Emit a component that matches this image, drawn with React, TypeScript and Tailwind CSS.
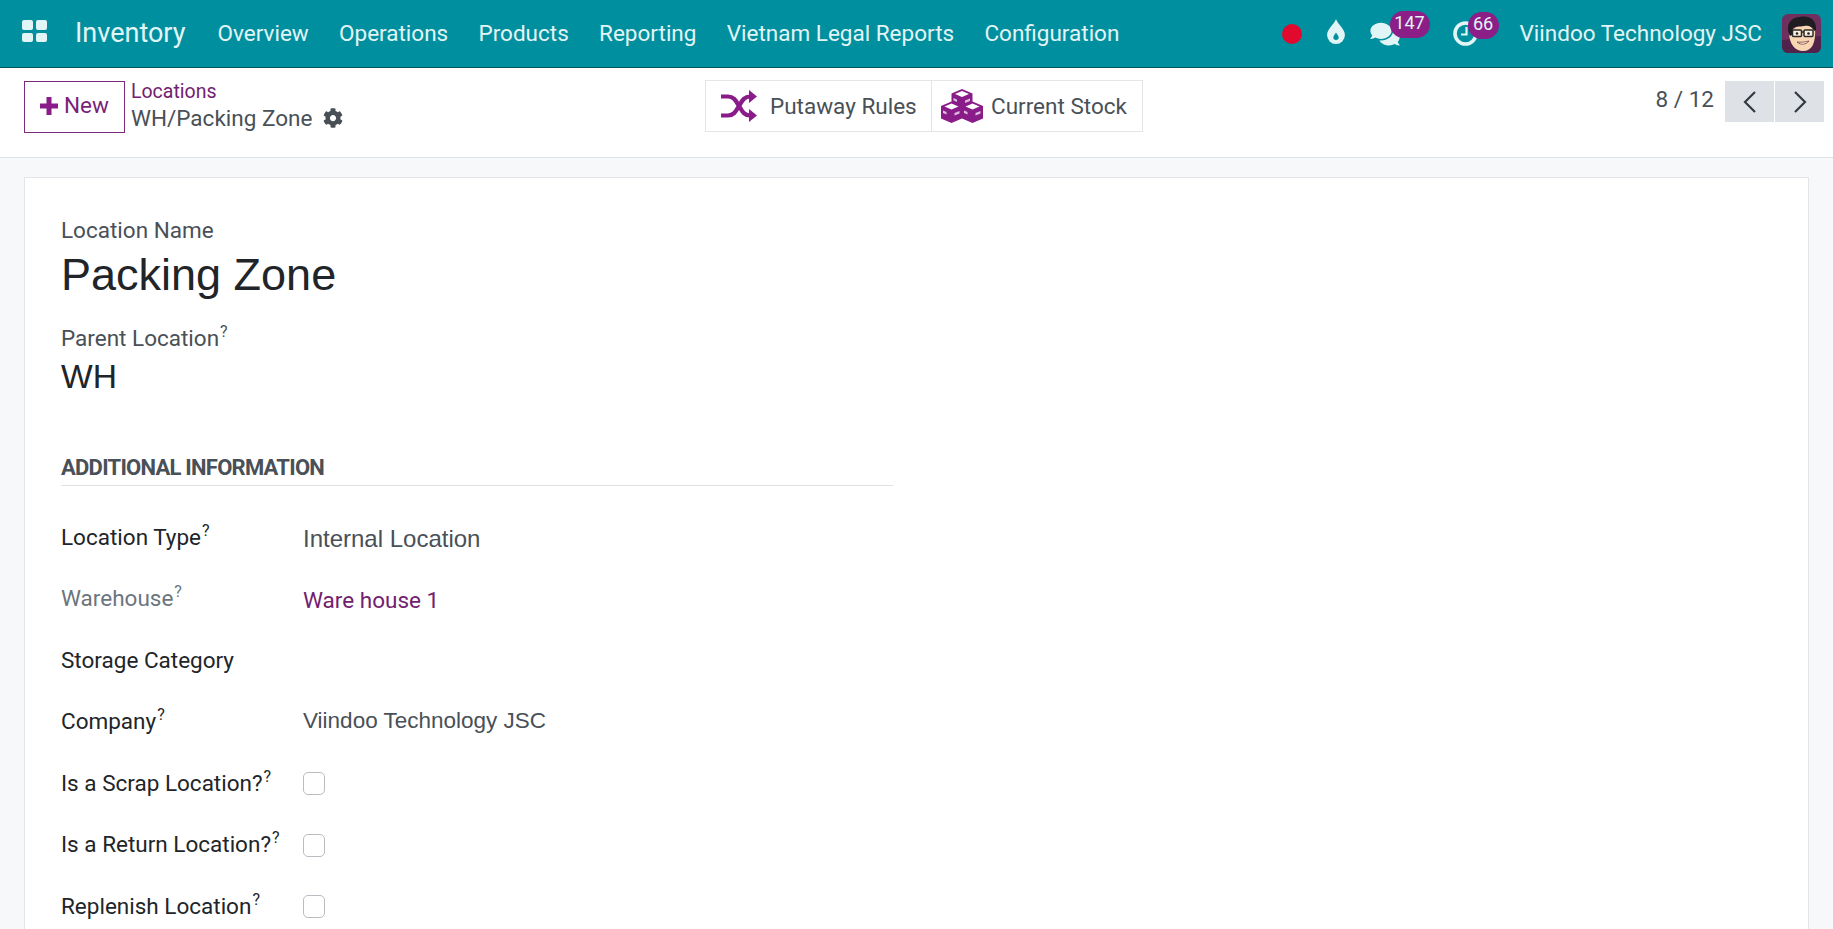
import { FaCog, FaComments } from 'react-icons/fa';

const navItems = ['Overview', 'Operations', 'Products', 'Reporting', 'Vietnam Legal Reports', 'Configuration'];

function Avatar() {
  return (
    <svg viewBox="0 0 39 39" className="w-[39px] h-[39px] rounded-[6px]">
      <rect width="39" height="39" fill="#6f305f" />
      <path d="M0 26 L39 22 V39 H0Z" fill="#52234a" />
      <path d="M7 18 C7 30 13 37 21 37 C30 37 34 29 33 14 L20 9 Z" fill="#f8d6b3" />
      <path d="M8 22 C3 12 8 3 18 3 C26 1 35 5 34 16 L32 17 C30 12 26 11 22 12 C17 13 13 12 11 14 L10 21 Z" fill="#1f1c22" />
      <rect x="10.5" y="16" width="9" height="6.5" rx="1" fill="#fbeede" stroke="#2a2a2a" strokeWidth="1.5" />
      <rect x="22" y="16" width="9" height="6.5" rx="1" fill="#fbeede" stroke="#2a2a2a" strokeWidth="1.5" />
      <path d="M19.5 18 H22" stroke="#2a2a2a" strokeWidth="1.3" />
      <circle cx="15" cy="19.5" r="1.3" fill="#222" />
      <circle cx="26.5" cy="19.5" r="1.3" fill="#222" />
      <path d="M15 28 C19 31.5 24 30.5 27 27 C24 28 19 28.5 15 28Z" fill="#fff" stroke="#8b4a3a" strokeWidth="0.9" />
    </svg>
  );
}

function ShuffleIcon() {
  return (
    <svg viewBox="0 0 36 32" className="ml-[15px] w-[36px] h-[32px] text-[#8a1c8a]" fill="none" stroke="currentColor" strokeWidth="4.2">
      <path d="M0 6.5 H7 C13 6.5 15 11 18 16 C21 21 23 25.5 29 25.5 H30" />
      <path d="M0 25.5 H7 C13 25.5 15 21 18 16 C21 11 23 6.5 29 6.5 H30" />
      <path d="M28 0 L36 6.5 L28 13Z M28 19 L36 25.5 L28 32Z" fill="currentColor" stroke="none" />
    </svg>
  );
}

function Cube({ cx, y }: { cx: number; y: number }) {
  return (
    <g>
      <path d={`M${cx} ${y} l10.5 4.6 v12.4 l-10.5 4.6 l-10.5 -4.6 v-12.4z`} fill="#8a1c8a" />
      <path d={`M${cx} ${y + 2} l7 3 l-7 3 l-7 -3z`} fill="#fff" />
      <path d={`M${cx - 8.5} ${y + 9} l3.5 1.5 v2.5 l-3.5 -1.5z`} fill="#fff" opacity="0.7" />
      <path d={`M${cx + 3} ${y + 11.5} l5 -2 v2.5 l-5 2z`} fill="#fff" opacity="0.7" />
    </g>
  );
}

function CubesIcon() {
  return (
    <svg viewBox="0 0 42 34" className="ml-[9px] w-[42px] h-[34px]">
      <Cube cx={21} y={0} />
      <Cube cx={10.5} y={12.4} />
      <Cube cx={31.5} y={12.4} />
    </svg>
  );
}

function Sup() {
  return <sup className="text-[16px] ml-px -top-[9px]">?</sup>;
}

function Row({ label, hint, muted, children }: { label: string; hint?: boolean; muted?: boolean; children?: React.ReactNode }) {
  return (
    <div className="flex items-center h-[61.5px]">
      <div className={`w-[242px] shrink-0 mb-[2px] text-[22.5px] leading-none ${muted ? 'text-[#6c757d]' : 'text-[#212529]'}`}>
        {label}
        {hint && <Sup />}
      </div>
      <div className="flex-1">{children}</div>
    </div>
  );
}

function Checkbox() {
  return <div className="w-[22px] h-[23px] rounded-[5px] border border-[#b9bdc2] bg-white" />;
}

export default function App() {
  return (
    <div className="h-screen overflow-hidden flex flex-col bg-[#f7f8fa] font-['Roboto',sans-serif] text-[#495057]">
      {/* top navbar */}
      <header className="h-[68px] shrink-0 bg-[#008f9e] border-b border-[#04545d] flex items-center text-[#e2f5f6]">
        <div className="ml-[22px] mb-[5px] grid grid-cols-2 gap-[3px] w-[25px]">
          <span className="w-[11px] h-[9.5px] rounded-[2px] bg-[#e2f5f6]" />
          <span className="w-[11px] h-[9.5px] rounded-[2px] bg-[#e2f5f6]" />
          <span className="w-[11px] h-[9.5px] rounded-[2px] bg-[#e2f5f6]" />
          <span className="w-[11px] h-[9.5px] rounded-[2px] bg-[#e2f5f6]" />
        </div>
        <span className="ml-[28px] text-[27px]">Inventory</span>
        <nav className="ml-[32px] flex gap-[30.3px] text-[22.5px]">
          {navItems.map((item) => (
            <span key={item}>{item}</span>
          ))}
        </nav>

        <div className="ml-auto flex items-center">
          <span className="w-[20px] h-[20px] rounded-full bg-[#e2092f]" />
          <svg viewBox="0 0 20 28" className="ml-[25px] mb-[5px] w-[18px] h-[25px]">
            <path fillRule="evenodd" d="M10 0 C12 6 20 11 20 18 A10 10 0 0 1 0 18 C0 11 8 6 10 0Z M10 15 C9 17 7 18.5 7 20.5 A3 3 0 0 0 13 20.5 C13 18.5 11 17 10 15Z" fill="#e2f5f6" />
          </svg>
          <div className="relative ml-[25px] w-[29px] h-[26px]">
            <FaComments className="w-[30px] h-[26px]" />
            <span className="absolute -top-[10px] left-[20px] w-[40px] h-[27px] rounded-full bg-[#8c1e88] text-[18px] leading-[23px] text-center">147</span>
          </div>
          <div className="relative ml-[54px] w-[25px] h-[25px]">
            <svg viewBox="0 0 25 25" className="w-[25px] h-[25px]" fill="none" stroke="#e2f5f6">
              <circle cx="12.5" cy="12.5" r="10.5" strokeWidth="3.6" />
              <path d="M13.5 6 V13.5 H8" strokeWidth="2.2" />
            </svg>
            <span className="absolute -top-[9px] left-[15px] w-[31px] h-[27px] rounded-full bg-[#8c1e88] text-[18px] leading-[23px] text-center">66</span>
          </div>
          <span className="ml-[42px] text-[22.5px]">Viindoo Technology JSC</span>
          <div className="ml-[20px] mr-[12px]">
            <Avatar />
          </div>
        </div>
      </header>

      {/* control panel */}
      <div className="h-[90px] shrink-0 bg-white border-b border-[#dee2e6] flex items-start relative">
        <button className="ml-[24px] mt-[13px] pb-[2px] w-[101px] h-[52px] border border-[#7c2a7c] flex items-center justify-center gap-[6px] text-[22.5px] text-[#7b1f7b]">
          <svg viewBox="0 0 18 18" className="w-[18px] h-[18px] text-[#8a1c8a]" fill="currentColor">
            <path d="M6.5 0h5v6.5H18v5h-6.5V18h-5v-6.5H0v-5h6.5z" />
          </svg>
          New
        </button>
        <div className="ml-[6px] mt-[10px]">
          <div className="text-[19.5px] leading-[28px] text-[#71216f]">Locations</div>
          <div className="flex items-center gap-[11px] text-[22.5px] leading-[24px]">
            WH/Packing Zone
            <FaCog className="w-[20px] h-[20px] text-[#4a4f55]" />
          </div>
        </div>
        <div className="absolute left-[705px] top-[12px] flex h-[52px] border-[1.5px] border-[#e3e5e8] text-[22.5px]">
          <div className="w-[226px] flex items-center border-r-[1.5px] border-[#e3e5e8]">
            <ShuffleIcon />
            <span className="ml-[13px] mt-[2px]">Putaway Rules</span>
          </div>
          <div className="w-[210px] flex items-center">
            <CubesIcon />
            <span className="ml-[8px] mt-[2px]">Current Stock</span>
          </div>
        </div>
        <div className="ml-auto mr-[9px] mt-[13px] flex items-start">
          <span className="text-[22.5px] leading-[36px] mr-[11px]">8 / 12</span>
          <div className="flex gap-px">
            <div className="w-[49px] h-[41px] bg-[#dee2e6] flex items-center justify-center">
              <svg viewBox="0 0 14 24" className="w-[14px] h-[24px]" fill="none" stroke="#343a40" strokeWidth="2.2"><path d="M12 2 L2 12 L12 22" /></svg>
            </div>
            <div className="w-[49px] h-[41px] bg-[#dee2e6] flex items-center justify-center">
              <svg viewBox="0 0 14 24" className="w-[14px] h-[24px]" fill="none" stroke="#343a40" strokeWidth="2.2"><path d="M2 2 L12 12 L2 22" /></svg>
            </div>
          </div>
        </div>
      </div>

      {/* form sheet, runs on below the fold */}
      <main className="flex-1 min-h-0 pt-[19px] pl-[24px] pr-[24px]">
        <div className="h-[800px] bg-white border border-[#e3e5e8] pl-[36px] pt-[39px]">
          <div className="text-[22.5px] leading-[26px]">Location Name</div>
          <div className="mt-[4px] font-['Liberation_Sans',sans-serif] text-[45px] leading-[56px] text-[#212529]">Packing Zone</div>
          <div className="mt-[22px] text-[22.5px] leading-[26px]">Parent Location<Sup /></div>
          <div className="mt-[5px] font-['Liberation_Sans',sans-serif] text-[33.6px] leading-[42px] text-[#212529]">WH</div>

          <div className="mt-[59px] w-[832px] h-[29px] border-b border-[#dee2e6] text-[22px] leading-[22px] font-bold tracking-[-0.75px]">ADDITIONAL INFORMATION</div>

          <div className="mt-[21px] w-[832px]">
            <Row label="Location Type" hint>
              <span className="block mt-[2px] font-['Liberation_Sans',sans-serif] text-[24px] leading-none">Internal Location</span>
            </Row>
            <Row label="Warehouse" hint muted>
              <span className="block mt-[2px] text-[22.5px] leading-none text-[#71216f]">Ware house 1</span>
            </Row>
            <Row label="Storage Category" />
            <Row label="Company" hint>
              <span className="font-['Liberation_Sans',sans-serif] text-[22.5px] leading-none">Viindoo Technology JSC</span>
            </Row>
            <Row label="Is a Scrap Location?" hint><Checkbox /></Row>
            <Row label="Is a Return Location?" hint><Checkbox /></Row>
            <Row label="Replenish Location" hint><Checkbox /></Row>
          </div>
        </div>
      </main>
    </div>
  );
}
